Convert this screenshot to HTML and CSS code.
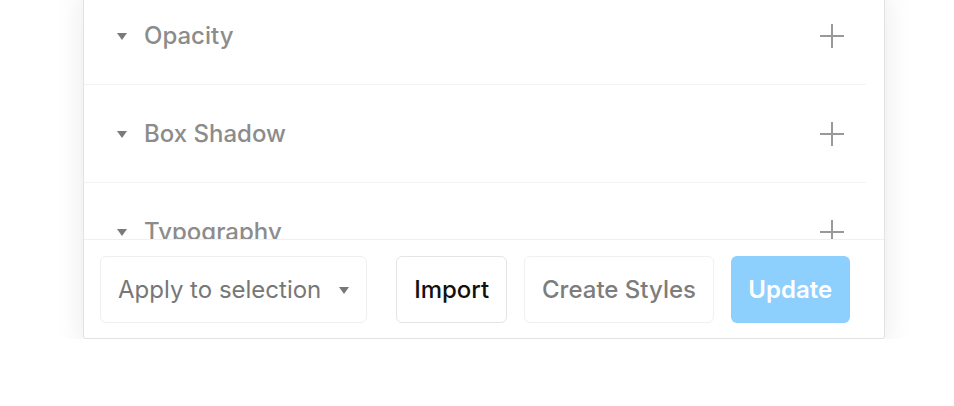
FILE: index.html
```html
<!DOCTYPE html>
<html>
<head>
<meta charset="utf-8">
<link rel="stylesheet" href="styles.css">
</head>
<body>
<div class="panel">
  <div class="scroll">
    <div class="row">
      <div class="row-title"><span class="caret"></span><span>Opacity</span></div>
      <svg class="plus" width="24" height="24" viewBox="0 0 24 24"><path d="M12 0V24M0 12H24" stroke="#999" stroke-width="2"/></svg>
    </div>
    <div class="row">
      <div class="row-title"><span class="caret"></span><span>Box Shadow</span></div>
      <svg class="plus" width="24" height="24" viewBox="0 0 24 24"><path d="M12 0V24M0 12H24" stroke="#999" stroke-width="2"/></svg>
    </div>
    <div class="row">
      <div class="row-title"><span class="caret"></span><span>Typography</span></div>
      <svg class="plus" width="24" height="24" viewBox="0 0 24 24"><path d="M12 0V24M0 12H24" stroke="#999" stroke-width="2"/></svg>
    </div>
  </div>
  <div class="footer">
    <div class="select"><span>Apply to selection</span><span class="caret sel-caret"></span></div>
    <button class="btn btn-import">Import</button>
    <button class="btn btn-create">Create Styles</button>
    <button class="btn btn-update">Update</button>
  </div>
</div>
</body>
</html>
```

FILE: styles.css
```css
html, body {
  margin: 0;
  padding: 0;
  background: #fff;
  font-family: Inter, "Noto Sans", sans-serif;
}
.panel {
  margin: -14px 0 0 83px;
  width: 800px;
  border: 1px solid #e2e2e2;
  border-radius: 3px;
  background: #fff;
  box-shadow: 0 6px 30px rgba(0, 0, 0, 0.09);
}
.scroll {
  height: 252px;
  overflow: hidden;
  padding-right: 18px;
}
.row {
  height: 97px;
  border-bottom: 1px solid #f3f3f3;
  display: flex;
  align-items: center;
  justify-content: space-between;
  padding: 0 22px 0 33px;
}
.row-title {
  display: flex;
  align-items: center;
  gap: 17px;
  font-size: 24px;
  font-weight: 500;
  color: #8c8c8c;
}
.caret {
  width: 0;
  height: 0;
  border-left: 5.5px solid transparent;
  border-right: 5.5px solid transparent;
  border-top: 7px solid #7a7a7a;
  margin-top: 1px;
}
.plus {
  display: block;
}
.footer {
  border-top: 1px solid #f0f0f0;
  height: 99px;
  box-sizing: border-box;
  padding: 16px 34px 0 16px;
  display: flex;
  align-items: flex-start;
  gap: 17px;
}
.select {
  width: 268px;
  height: 67px;
  box-sizing: border-box;
  border: 1px solid #efefef;
  border-radius: 6px;
  display: flex;
  align-items: center;
  justify-content: space-between;
  padding: 0 17px 0 17px;
  font-size: 24px;
  color: #777;
  margin-right: 12px;
}
.sel-caret {
  border-top-color: #777;
}
.btn {
  height: 67px;
  box-sizing: border-box;
  border-radius: 6px;
  font-family: Inter, "Noto Sans", sans-serif;
  font-size: 24px;
  font-weight: 500;
  background: #fff;
  padding: 0;
}
.btn-import {
  border: 1.5px solid #e4e4e4;
  color: #111;
  width: 112px;
}
.btn-create {
  border: 1px solid #f0f0f0;
  color: #7d7d7d;
  width: 190px;
}
.btn-update {
  border: none;
  background: #8dcffd;
  color: #fff;
  width: 120px;
  font-weight: 600;
}
```
